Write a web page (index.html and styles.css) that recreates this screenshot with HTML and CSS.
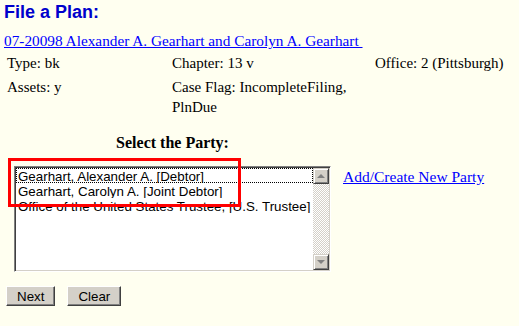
FILE: index.html
```html
<!DOCTYPE html>
<html lang="en">
<head>
    <meta charset="UTF-8">
    <meta name="viewport" content="width=device-width, initial-scale=1.0">
    <title>File a Plan</title>
    <link rel="stylesheet" href="styles.css">
</head>
<body>
    <h1 class="title">File a Plan:</h1>
    <div class="case">
        <a href="#">07-20098 Alexander A. Gearhart and Carolyn A. Gearhart&nbsp;</a>
    </div>

    <div class="info">
        <div>Type: bk</div>
        <div>Chapter: 13 v</div>
        <div>Office: 2 (Pittsburgh)</div>
        <div>Assets: y</div>
        <div>Case Flag: IncompleteFiling, PlnDue</div>
        <div></div>
    </div>

    <div class="party">
        <div class="party-label">Select the Party:</div>
        <div class="listbox">
            <ul class="options">
                <li class="option focused">Gearhart, Alexander A. [Debtor]</li>
                <li class="option">Gearhart, Carolyn A. [Joint Debtor]</li>
                <li class="option">Office of the United States Trustee, [U.S. Trustee]</li>
            </ul>
            <div class="scrollbar">
                <div class="scroll-btn"><span class="arrow-up"></span></div>
                <div class="scroll-track"></div>
                <div class="scroll-btn"><span class="arrow-down"></span></div>
            </div>
            <div class="callout"></div>
        </div>
        <a href="#" class="add-party">Add/Create New Party</a>
    </div>

    <div class="actions">
        <button class="btn">Next</button>
        <button class="btn">Clear</button>
    </div>
</body>
</html>
```

FILE: styles.css
```css
body {
    margin: 0;
    padding: 0 4px;
    background-color: #fffff0;
    font-family: "Liberation Serif", "Times New Roman", serif;
    font-size: 15px;
    color: #000;
}

a {
    color: #0000ff;
    text-decoration: underline;
}

.title {
    margin: 0;
    font-family: "Liberation Sans", Arial, sans-serif;
    font-size: 18px;
    font-weight: bold;
    line-height: 24px;
    color: #0000cc;
}

.case {
    margin-top: 7px;
    font-size: 15.3px;
    line-height: 20px;
}

.info {
    display: grid;
    grid-template-columns: 165px 203px auto;
    row-gap: 4px;
    margin: 2px 0 0 3px;
    line-height: 20px;
}

.party {
    display: grid;
    grid-template-columns: 317px auto;
    column-gap: 12px;
    row-gap: 13px;
    margin: 16px 0 0 10px;
}

.party-label {
    grid-column: 1;
    text-align: center;
    font-size: 16px;
    font-weight: bold;
    line-height: 20px;
}

.listbox {
    grid-column: 1;
    position: relative;
    display: flex;
    box-sizing: border-box;
    width: 317px;
    height: 106px;
    padding: 1px;
    background-color: #fff;
    border: 1px solid;
    border-color: #808080 #fff #fff #808080;
    box-shadow: inset 1px 1px #404040, inset -1px -1px #d4d0c8;
}

.options {
    flex: 1;
    margin: 0;
    padding: 0;
    list-style: none;
    font-family: "Liberation Sans", Arial, sans-serif;
    font-size: 13.33px;
}

.option {
    height: 15px;
    line-height: 17px;
    padding-left: 2px;
    white-space: nowrap;
    overflow: hidden;
}

.option.focused {
    outline: 1px dotted #000;
    outline-offset: -1px;
}

.scrollbar {
    display: flex;
    flex-direction: column;
    width: 16px;
}

.scroll-btn {
    display: flex;
    justify-content: center;
    align-items: center;
    box-sizing: border-box;
    height: 16px;
    background-color: #d4d0c8;
    border: 1px solid;
    border-color: #d4d0c8 #404040 #404040 #d4d0c8;
    box-shadow: inset 1px 1px #fff, inset -1px -1px #808080;
}

.arrow-up,
.arrow-down {
    width: 0;
    height: 0;
    border-left: 4px solid transparent;
    border-right: 4px solid transparent;
}

.arrow-up {
    border-bottom: 4px solid #808080;
}

.arrow-down {
    border-top: 4px solid #808080;
}

.scroll-track {
    flex: 1;
    background-color: #fff;
    background-image: conic-gradient(#fff 25%, #d4d0c8 0 50%, #fff 0 75%, #d4d0c8 0);
    background-size: 2px 2px;
}

/* red marker drawn over the first two parties */
.callout {
    position: absolute;
    left: -7px;
    top: -9px;
    width: 233px;
    height: 49px;
    box-sizing: border-box;
    border: 3px solid #f00;
    pointer-events: none;
}

.add-party {
    grid-column: 2;
    margin-top: 1px;
    font-size: 15.5px;
    line-height: 20px;
}

.actions {
    display: flex;
    gap: 12px;
    margin: 14px 0 0 2px;
}

.btn {
    height: 20px;
    padding: 0 10px;
    font-family: "Liberation Sans", Arial, sans-serif;
    font-size: 13.33px;
    color: #000;
    background-color: #d4d0c8;
    border: 1px solid;
    border-color: #fff #404040 #404040 #fff;
    box-shadow: inset -1px -1px #808080;
    cursor: pointer;
}
```
